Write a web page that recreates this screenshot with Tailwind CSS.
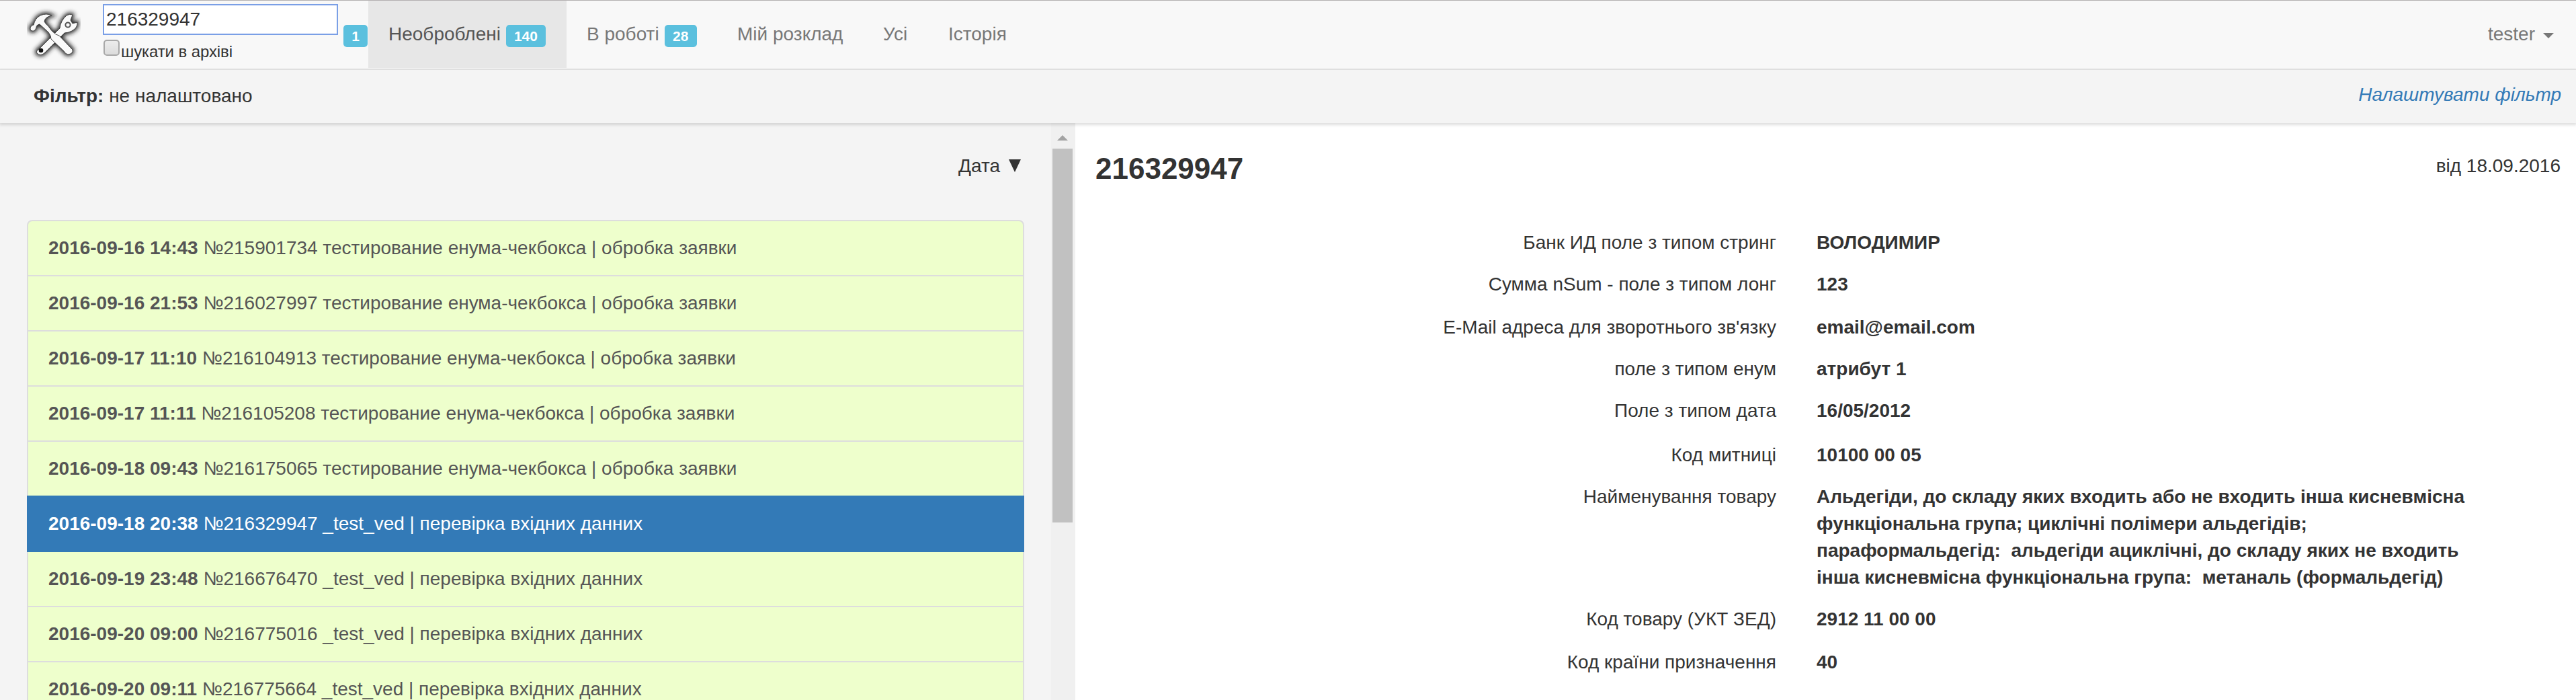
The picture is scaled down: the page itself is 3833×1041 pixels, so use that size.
<!DOCTYPE html>
<html lang="uk">
<head>
<meta charset="utf-8">
<title>Необроблені</title>
<script src="https://cdn.jsdelivr.net/npm/@tailwindcss/browser@4"></script>
</head>
<body class="h-[1041px] w-[3833px] overflow-hidden bg-[#f4f4f4] font-['Liberation_Sans',Arial,sans-serif] text-[28px] leading-[40px] text-[#333]">
<div class="flex h-full flex-col">
  <header class="flex h-[104px] shrink-0 border-t border-b-2 border-t-[#b3b0b1] border-b-[#e5e5e5] bg-[#f8f8f8] text-[#777]">
    <svg class="mt-[9px] ml-10 h-20 w-20 shrink-0" viewBox="0 0 80 80">
      <defs><filter id="glow" x="-20%" y="-20%" width="140%" height="140%"><feGaussianBlur stdDeviation="3.2"/></filter>
      <g id="tools">
        <path d="M18 63 L49 32 Q50 21 59 13 Q64 10 68 12 L65 20 L68 25 L75 23 Q76 31 67 36 Q61 39 56 39 L26 69 Q20 74 15 69 Q13 66 18 63Z"/>
        <path d="M5 33 Q5 28 10 27 Q12 17 20 13 Q29 9 37 13 Q27 15 26 22 Q28 26 32 29 Q36 36 43 41 L48 43 L68 64 Q69 70 61 71 Q57 70 55 66 L36 48 Q36 43 32 38 L19 26 Q14 27 14 31 Q12 37 8 36 Q5 36 5 33Z"/>
      </g></defs>
      <use href="#tools" fill="#222" stroke="#222" stroke-width="5" filter="url(#glow)"/>
      <use href="#tools" fill="#fafafa" stroke="#444" stroke-width="1"/>
      <circle cx="61" cy="27" r="3.6" fill="none" stroke="#555" stroke-width="2"/>
      <circle cx="21" cy="65" r="3.3" fill="#111"/>
    </svg>
    <div class="ml-[33px] w-[350px] shrink-0 pt-[5px] text-[#333]">
      <div class="h-[46px] border-2 border-[#7a9fe6] bg-white pl-[3px] leading-[42px]">216329947</div>
      <div class="mt-[7px] flex h-8 items-start">
        <span class="ml-px h-6 w-6 rounded-[5px] border-2 border-[#a9a9a9] bg-linear-to-b from-[#ececec] to-[#dcdcdc]"></span>
        <span class="ml-[2px] text-[24px] leading-[36px] tracking-[-0.1px]">шукати в архіві</span>
      </div>
    </div>
    <span class="mt-9 ml-2 h-[33px] w-9 shrink-0 rounded-[5px] bg-[#5bc0de] text-center text-[21px] leading-[33px] font-bold text-white">1</span>
    <nav class="ml-px flex leading-[40px]">
      <div class="flex h-[100px] w-[295px] bg-[#e7e7e7] pt-[30px] pl-[30px] text-[#555]">Необроблені<span class="mt-[6px] ml-2 h-[33px] w-[59px] rounded-[5px] bg-[#5bc0de] text-center text-[21px] leading-[33px] font-bold text-white">140</span></div>
      <div class="flex w-[224px] pt-[30px] pl-[30px]">В роботі<span class="mt-[6px] ml-2 h-[33px] w-12 rounded-[5px] bg-[#5bc0de] text-center text-[21px] leading-[33px] font-bold text-white">28</span></div>
      <div class="w-[217px] pt-[30px] pl-[30px]">Мій розклад</div>
      <div class="w-[97px] pt-[30px] pl-[30px]">Усі</div>
      <div class="pt-[30px] pl-[30px]">Історія</div>
    </nav>
    <div class="mr-[33px] ml-auto flex pt-[30px]">tester
      <svg class="mt-[18px] ml-3 h-2 w-4" viewBox="0 0 16 8"><path d="M0 0h16L8 8z" fill="#777"/></svg>
    </div>
  </header>
  <div class="z-10 flex h-[79px] shrink-0 justify-between bg-[#f4f4f4] pr-[22px] pl-[50px] shadow-[0_2px_4px_1px_rgba(0,0,0,0.13)]">
    <div class="pt-[19px]"><b>Фільтр:</b> не налаштовано</div>
    <a class="pt-[17px] text-[#337ab7] italic">Налаштувати фільтр</a>
  </div>
  <div class="flex h-[858px]">
    <aside class="h-full w-[1564px] shrink-0 overflow-hidden pl-10">
      <div class="flex h-[144px] w-[1484px] justify-end pt-[44px] pr-[5px]">Дата
        <svg class="mt-[10px] ml-[13px] h-[19px] w-[18px]" viewBox="0 0 18 19"><path d="M0 0h18L9 19z" fill="#333"/></svg>
      </div>
      <div class="w-[1484px] text-[#555]">
        <div class="h-[84px] rounded-t-lg border-2 border-[#ddd] bg-[#eeffcc] px-[30px] pt-5"><b>2016-09-16 14:43</b> №215901734 тестирование енума-чекбокса | обробка заявки</div>
        <div class="-mt-[2px] h-[84px] border-2 border-[#ddd] bg-[#eeffcc] px-[30px] pt-5"><b>2016-09-16 21:53</b> №216027997 тестирование енума-чекбокса | обробка заявки</div>
        <div class="-mt-[2px] h-[84px] border-2 border-[#ddd] bg-[#eeffcc] px-[30px] pt-5"><b>2016-09-17 11:10</b> №216104913 тестирование енума-чекбокса | обробка заявки</div>
        <div class="-mt-[2px] h-[84px] border-2 border-[#ddd] bg-[#eeffcc] px-[30px] pt-5"><b>2016-09-17 11:11</b> №216105208 тестирование енума-чекбокса | обробка заявки</div>
        <div class="-mt-[2px] h-[84px] border-2 border-[#ddd] bg-[#eeffcc] px-[30px] pt-5"><b>2016-09-18 09:43</b> №216175065 тестирование енума-чекбокса | обробка заявки</div>
        <div class="relative z-[1] -mt-[2px] h-[84px] border-2 border-[#337ab7] bg-[#337ab7] px-[30px] pt-5 text-white"><b>2016-09-18 20:38</b> №216329947 _test_ved | перевірка вхідних данних</div>
        <div class="-mt-[2px] h-[84px] border-2 border-[#ddd] bg-[#eeffcc] px-[30px] pt-5"><b>2016-09-19 23:48</b> №216676470 _test_ved | перевірка вхідних данних</div>
        <div class="-mt-[2px] h-[84px] border-2 border-[#ddd] bg-[#eeffcc] px-[30px] pt-5"><b>2016-09-20 09:00</b> №216775016 _test_ved | перевірка вхідних данних</div>
        <div class="-mt-[2px] h-[84px] border-2 border-[#ddd] bg-[#eeffcc] px-[30px] pt-5"><b>2016-09-20 09:11</b> №216775664 _test_ved | перевірка вхідних данних</div>
      </div>
    </aside>
    <div class="flex h-full w-9 shrink-0 flex-col bg-[#f0f0f0] pl-[2px]">
      <svg class="mt-[18px] ml-[7px] h-2 w-4 shrink-0" viewBox="0 0 16 8"><path d="M0 8h16L8 0z" fill="#a3a3a3"/></svg>
      <div class="mt-3 h-[556px] w-[30px] bg-[#c1c1c1]"></div>
    </div>
    <main class="h-full grow bg-white pt-[44px] pr-[23px] pl-[30px]">
      <div class="flex h-[114px] justify-between">
        <h1 class="text-[44px] leading-[48px] font-bold">216329947</h1>
        <span>від 18.09.2016</span>
      </div>
      <div class="grid grid-cols-[1013px_1000px] grid-rows-[62px_64px_62px_62px_66px_62px_182px_64px_40px] gap-x-[60px]">
        <span class="text-right">Банк ИД поле з типом стринг</span><b>ВОЛОДИМИР</b>
        <span class="text-right">Сумма nSum - поле з типом лонг</span><b>123</b>
        <span class="text-right">E-Mail адреса для зворотнього зв'язку</span><b>email@email.com</b>
        <span class="text-right">поле з типом енум</span><b>атрибут 1</b>
        <span class="text-right">Поле з типом дата</span><b>16/05/2012</b>
        <span class="text-right">Код митниці</span><b>10100 00 05</b>
        <span class="text-right">Найменування товару</span><b class="whitespace-pre">Альдегіди, до складу яких входить або не входить інша кисневмісна
функціональна група; циклічні полімери альдегідів;
параформальдегід:  альдегіди ациклічні, до складу яких не входить
інша кисневмісна функціональна група:  метаналь (формальдегід)</b>
        <span class="text-right">Код товару (УКТ ЗЕД)</span><b>2912 11 00 00</b>
        <span class="text-right">Код країни призначення</span><b>40</b>
      </div>
    </main>
  </div>
</div>
</body>
</html>
